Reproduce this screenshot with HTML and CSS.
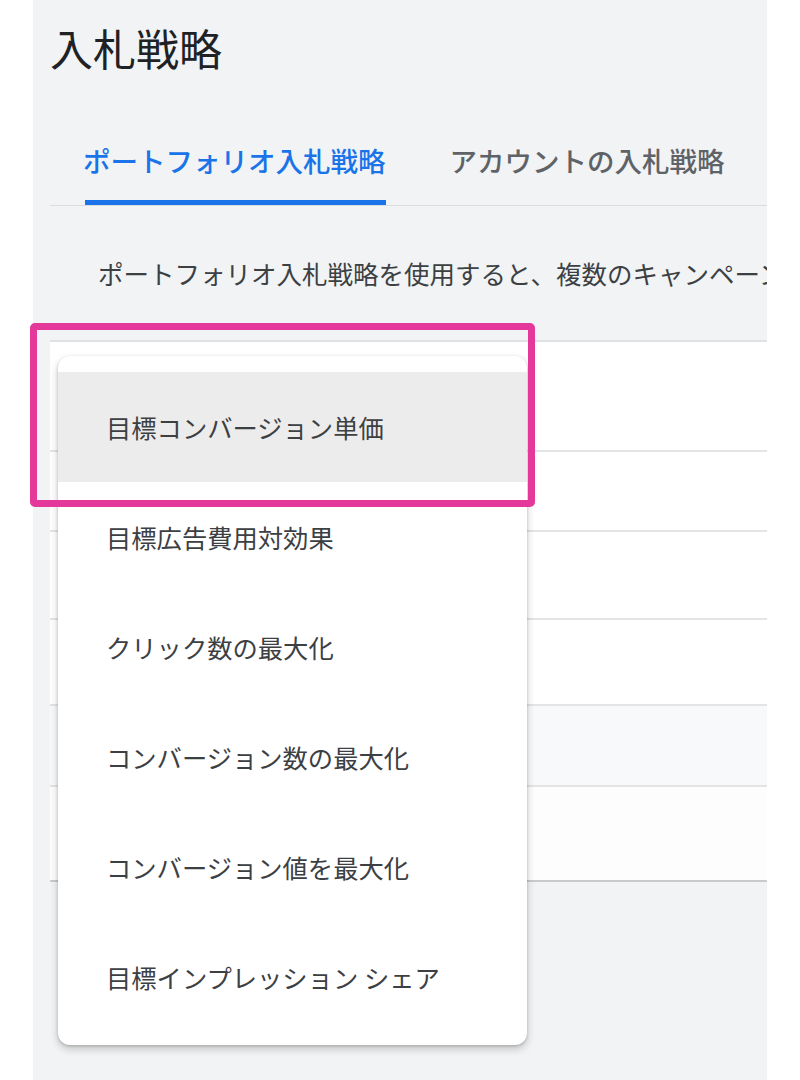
FILE: index.html
```html
<!DOCTYPE html>
<html lang="ja">
<head>
<meta charset="utf-8">
<title>入札戦略</title>
<link rel="stylesheet" href="styles.css">
</head>
<body>
<div class="page">
  <main class="panel">
    <h1 class="title">入札戦略</h1>
    <nav class="tabs">
      <div class="tab active">ポートフォリオ入札戦略</div>
      <div class="tab">アカウントの入札戦略</div>
    </nav>
    <p class="desc">ポートフォリオ入札戦略を使用すると、複数のキャンペーン</p>
    <section class="card">
      <div class="row r1"></div>
      <div class="row r2"></div>
      <div class="row r3"></div>
      <div class="row r4"></div>
      <div class="row r5"></div>
      <div class="row r6"></div>
    </section>
  </main>
  <ul class="menu">
    <li class="item selected">目標コンバージョン単価</li>
    <li class="item">目標広告費用対効果</li>
    <li class="item">クリック数の最大化</li>
    <li class="item">コンバージョン数の最大化</li>
    <li class="item">コンバージョン値を最大化</li>
    <li class="item">目標インプレッション シェア</li>
  </ul>
  <div class="mark"></div>
</div>
</body>
</html>
```
FILE: styles.css
```css
html, body {
  margin: 0;
  padding: 0;
  background: #ffffff;
}
body {
  font-family: "Noto Sans CJK JP", "Noto Sans", sans-serif;
  color: #202124;
}
.page {
  position: relative;
  width: 800px;
  height: 1080px;
  overflow: hidden;
}
.panel {
  margin-left: 33px;
  width: 734px;
  height: 1080px;
  background: #f1f3f4;
  overflow: hidden;
  padding-left: 17px;
  box-sizing: border-box;
}
.title {
  margin: 0;
  padding-top: 17px;
  font-size: 43px;
  font-weight: 400;
  line-height: 60px;
  color: #202124;
}
.tabs {
  margin-top: 40px;
  display: flex;
  border-bottom: 1px solid #dadce0;
  width: 760px;
  padding-left: 1px;
}
.tab {
  padding: 23px 32px 20px;
  line-height: 40px;
  font-size: 27.5px;
  font-weight: 500;
  color: #5f6368;
  white-space: nowrap;
  border-bottom: 5px solid transparent;
}
.tab.active {
  color: #1a73e8;
  border-bottom: 0;
  padding-bottom: 25px;
  background-image: linear-gradient(#1a73e8, #1a73e8);
  background-size: calc(100% - 66px) 5px;
  background-position: 34px 100%;
  background-repeat: no-repeat;
}
.desc {
  margin: 47px 0 0;
  padding-left: 48px;
  font-size: 25.5px;
  line-height: 40px;
  color: #3c4043;
  white-space: nowrap;
}
.card {
  margin-top: 47px;
  width: 760px;
  background: #ffffff;
  border-top: 2px solid #dfe1e4;
}
.row {
  border-bottom: 2px solid #e3e4e6;
}
.r1 { height: 108px; }
.r2 { height: 78px; }
.r3 { height: 86px; }
.r4 { height: 84px; }
.r5 { height: 79px; background: #f8f9fa; }
.r6 { height: 93px; background: #fdfdfd; border-bottom: 2px solid #c9cacc; }

.menu {
  position: absolute;
  left: 58px;
  top: 356px;
  width: 469px;
  margin: 0;
  padding: 16px 0 13px;
  list-style: none;
  background: #ffffff;
  border-radius: 12px;
  box-shadow: 0 1px 3px rgba(0, 0, 0, 0.18), 0 4px 8px rgba(0, 0, 0, 0.2);
}
.item {
  height: 110px;
  display: flex;
  align-items: center;
  padding-left: 48px;
  font-size: 25.3px;
  color: #3c4043;
  white-space: nowrap;
}
.item.selected {
  background: #ececec;
}
.mark {
  position: absolute;
  left: 30px;
  top: 323px;
  width: 505px;
  height: 184px;
  box-sizing: border-box;
  border: 7px solid #e4389b;
  border-radius: 5px;
}
```
